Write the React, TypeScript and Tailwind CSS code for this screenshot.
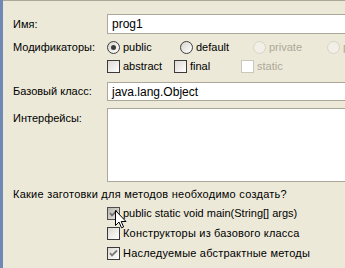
import React from 'react'

type BoxProps = {
	checked?: boolean
	disabled?: boolean
	pressed?: boolean
}

const CheckBox = ({ checked, disabled, pressed }: BoxProps) => (
	<span
		className={`relative inline-block w-[13px] h-[13px] shrink-0 border ${
			disabled
				? 'border-[#cac8bb] bg-white'
				: pressed
					? 'border-[#4d4d4d] bg-gradient-to-br from-[#b9b7ad] to-[#e9e8e2]'
					: 'border-[#3b3b3b] bg-gradient-to-br from-[#dcdad2] to-white'
		}`}
	>
		{checked && (
			<svg viewBox="0 0 11 11" className="absolute inset-0 w-[11px] h-[11px]">
				<path d="M2 5 L4 7.5 L9 2.5" fill="none" stroke={pressed ? '#6f6f6f' : '#7a7a7a'} strokeWidth="1.8" />
			</svg>
		)}
	</span>
)

const Radio = ({ checked, disabled }: BoxProps) => (
	<span
		className={`relative inline-block w-[13px] h-[13px] shrink-0 rounded-full border ${
			disabled
				? 'border-[#d6d4c9] bg-[#f1efe6]'
				: 'border-[#3d3d3d] bg-gradient-to-br from-[#d8d6cd] to-white'
		}`}
	>
		{checked && <span className="absolute left-[3px] top-[3px] w-[5px] h-[5px] rounded-full bg-[#3a3a3a]" />}
	</span>
)

const Field = ({ children, className }: { children?: React.ReactNode; className?: string }) => (
	<div className={`${className} bg-white border-t border-b border-l border-[#aca899] pl-[4px] flex items-center`}>
		{children}
	</div>
)

export default function App() {
	return (
		<div
			className="relative w-[345px] h-[268px] overflow-hidden flex bg-[#ece9d8] text-[11px] text-black"
			style={{ fontFamily: '"Liberation Sans", Arial, sans-serif' }}
		>
			<div className="w-[3px] shrink-0 bg-[#6f88b4]" />

			<div className="flex-1 flex flex-col">
				<div className="h-[1px] bg-[#aca899]" />

				<div className="grid grid-cols-[94px_1fr] pl-[10px] mt-[13px]">
					<div className="flex items-center h-[20px]">Имя:</div>
					<Field className="h-[20px]">
						<span className="text-[12px]">prog1</span>
					</Field>
				</div>

				<div className="grid grid-cols-[94px_1fr] pl-[10px] mt-[7px]">
					<div className="flex items-center h-[13px]">Модификаторы:</div>
					<div className="flex items-center h-[13px] whitespace-nowrap overflow-hidden">
						<div className="flex items-center gap-[3px] w-[73px] shrink-0">
							<Radio checked />
							<span>public</span>
						</div>
						<div className="flex items-center gap-[3px] w-[73px] shrink-0">
							<Radio />
							<span>default</span>
						</div>
						<div className="flex items-center gap-[3px] w-[74px] shrink-0 text-[#aca899]">
							<Radio disabled />
							<span>private</span>
						</div>
						<div className="flex items-center gap-[3px] shrink-0 text-[#aca899]">
							<Radio disabled />
							<span>protected</span>
						</div>
					</div>
				</div>

				<div className="grid grid-cols-[94px_1fr] pl-[10px] mt-[6px]">
					<div />
					<div className="flex items-center h-[13px] whitespace-nowrap">
						<div className="flex items-center gap-[3px] w-[67px]">
							<CheckBox />
							<span>abstract</span>
						</div>
						<div className="flex items-center gap-[3px] w-[67px]">
							<CheckBox />
							<span>final</span>
						</div>
						<div className="flex items-center gap-[3px] text-[#aca899]">
							<CheckBox disabled />
							<span>static</span>
						</div>
					</div>
				</div>

				<div className="grid grid-cols-[94px_1fr] pl-[10px] mt-[9px]">
					<div className="flex items-center h-[19px]">Базовый класс:</div>
					<Field className="h-[19px]">
						<span className="text-[12px]">java.lang.Object</span>
					</Field>
				</div>

				<div className="grid grid-cols-[94px_1fr] pl-[10px] mt-[7px]">
					<div className="pt-[2px]">Интерфейсы:</div>
					<div className="h-[74px] bg-white border-t border-b border-l border-[#aca899]" />
				</div>

				<div className="pl-[10px] mt-[6px] h-[13px] flex items-center tracking-[0.25px]">
					Какие заготовки для методов необходимо создать?
				</div>

				<div className="flex flex-col gap-[7px] pl-[104px] mt-[6px]">
					<div className="flex items-center gap-[3px] h-[13px]">
						<CheckBox checked pressed />
						<span>public static void main(String[] args)</span>
					</div>
					<div className="flex items-center gap-[3px] h-[13px]">
						<CheckBox />
						<span className="tracking-[0.2px]">Конструкторы из базового класса</span>
					</div>
					<div className="flex items-center gap-[3px] h-[13px]">
						<CheckBox checked />
						<span className="tracking-[0.2px]">Наследуемые абстрактные методы</span>
					</div>
				</div>
			</div>

			<svg
				viewBox="0 0 12 19"
				className="absolute left-[115px] top-[210px] w-[12px] h-[19px]"
			>
				<path
					d="M0.5 0.5 L0.5 15.5 L4 12 L6.5 17.8 L8.6 16.9 L6.2 11.5 L11 11.5 Z"
					fill="white"
					stroke="black"
					strokeWidth="1"
					strokeLinejoin="miter"
				/>
			</svg>
		</div>
	)
}
